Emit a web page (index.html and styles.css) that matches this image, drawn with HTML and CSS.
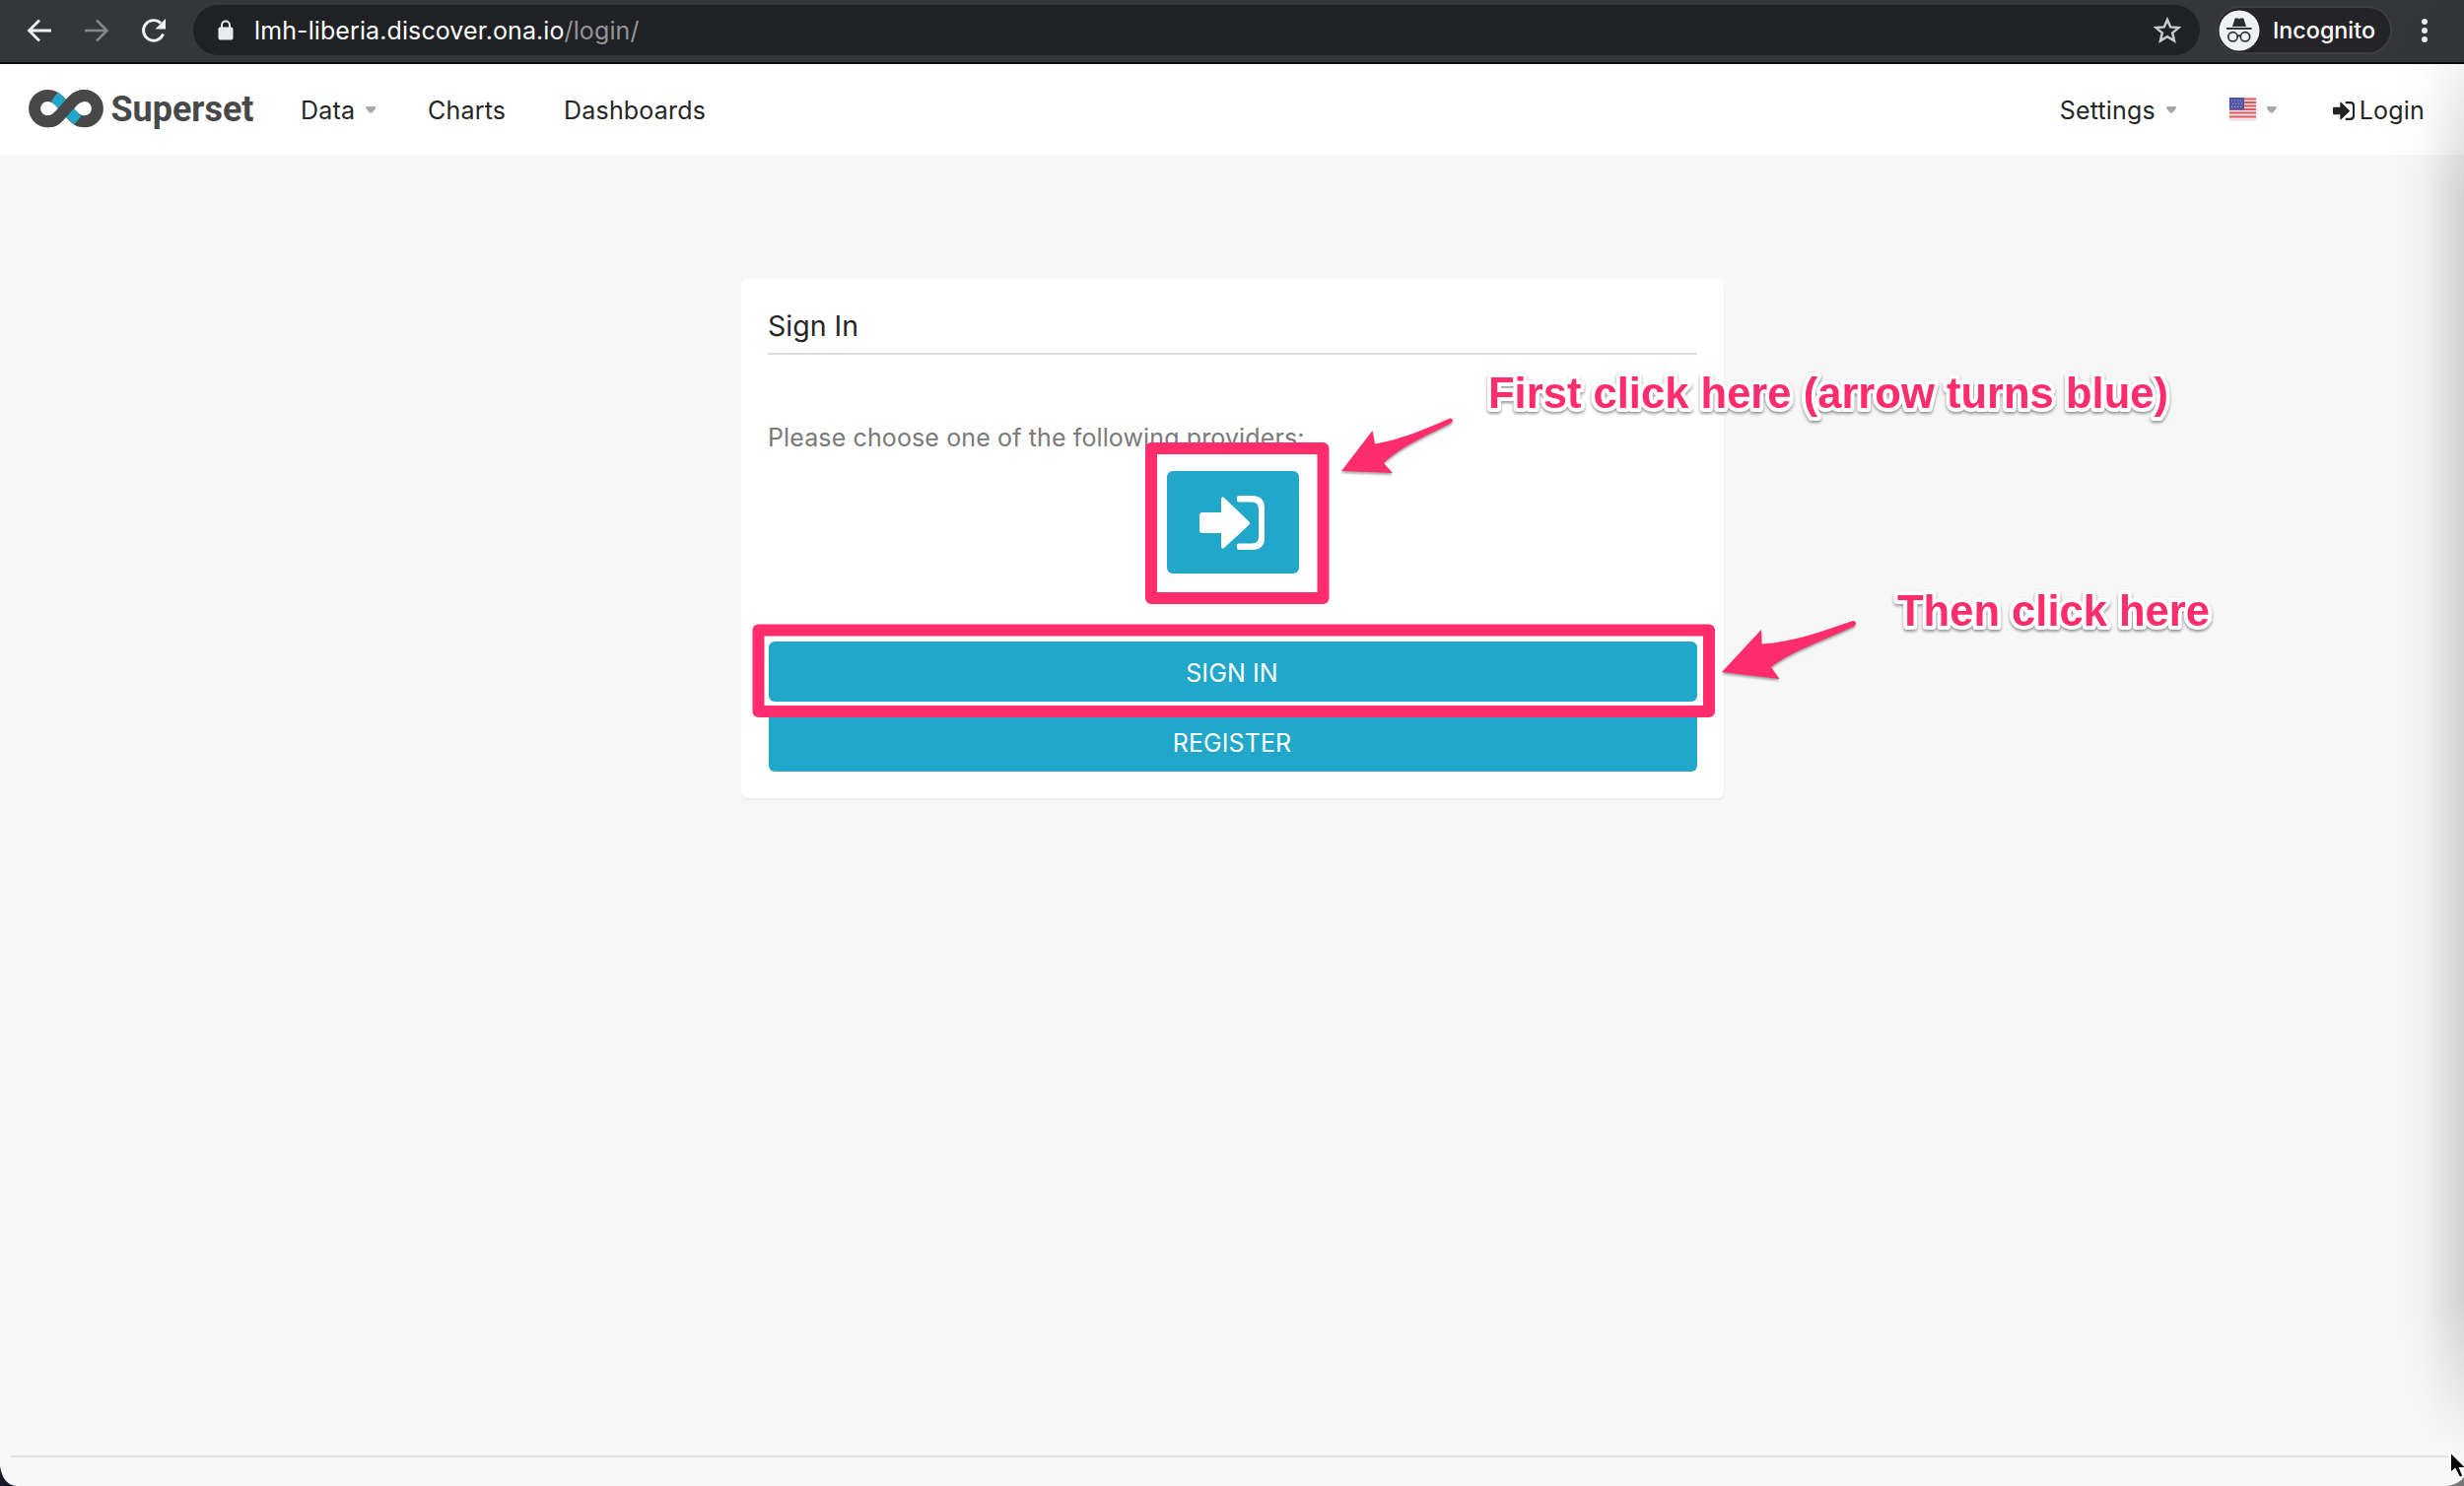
FILE: index.html
```html
<!DOCTYPE html>
<html lang="en">
<head>
<meta charset="utf-8">
<title>Superset</title>
<link rel="stylesheet" href="styles.css">
</head>
<body>
<svg class="defs" width="0" height="0">
  <symbol id="signin" viewBox="0 0 66 55">
    <path d="M3 17h19V4q0-4 3-2l25 24q2 2 0 4L25 53q-3 2-3-2V38H3q-3 0-3-3V20q0-3 3-3z"/>
    <path d="M40 0h13q13 0 13 12v31q0 12-13 12H40q-2 0-2-2v-3q0-1.500 2-1.500h13q7 0 7-7v-28q0-7-7-7H40q-2 0-2-2V2q0-2 2-2z"/>
  </symbol>
</svg>

<header class="toolbar">
  <nav class="controls">
    <svg width="26" height="26" viewBox="0 0 26 26"><path d="M25 13H3M13 2.500 2.500 13 13 23.500" fill="none" stroke="#f1f3f4" stroke-width="2.800"/></svg>
    <svg width="26" height="26" viewBox="0 0 26 26"><path d="M1 13h22M13 2.500 23.500 13 13 23.500" fill="none" stroke="#85868a" stroke-width="2.600"/></svg>
    <svg width="26" height="26" viewBox="0 0 26 26"><path d="M22.500 16.500A10.300 10.300 0 1 1 20 5.500" fill="none" stroke="#f1f3f4" stroke-width="2.900"/><path d="M25 1v10.500H14.500z" fill="#f1f3f4"/></svg>
  </nav>
  <div class="address">
    <svg width="16" height="21" viewBox="0 0 16 21"><path d="M4 9V5.500a4 4 0 0 1 8 0V9" fill="none" stroke="#e8eaed" stroke-width="2"/><rect x=".5" y="7.500" width="15" height="13" rx="2" fill="#e8eaed"/></svg>
    <span class="url">lmh-liberia.discover.ona.io<span class="path">/login/</span></span>
    <svg class="star" width="28" height="27" viewBox="0 0 28 27"><path d="M14 3l3.200 7.400 8.100.7-6.100 5.300 1.800 7.900-7-4.200-7 4.200 1.800-7.900L2.700 11.100l8.100-.7z" fill="none" stroke="#c8cacd" stroke-width="2.500"/></svg>
  </div>
  <div class="incognito">
    <svg width="42" height="42" viewBox="0 0 42 42"><circle cx="21" cy="21" r="20.500" fill="#eff1f5"/><g fill="#2b2c30"><path d="M14 17l2.500-8q.5-1 1.500-.7l3 .7 3-.7q1-.3 1.500.7l2.500 8z"/><rect x="8" y="18" width="25.500" height="1.900"/></g><g fill="none" stroke="#2b2c30" stroke-width="1.700"><circle cx="14.500" cy="27.300" r="4.700"/><circle cx="27" cy="27.300" r="4.700"/><path d="M19 26.800q1.700-1.200 3.500 0"/></g></svg>
    <span>Incognito</span>
  </div>
  <svg class="menu" width="8" height="26" viewBox="0 0 8 26"><g fill="#e8eaed"><circle cx="4" cy="4" r="3"/><circle cx="4" cy="13" r="3"/><circle cx="4" cy="22" r="3"/></g></svg>
</header>

<nav class="navbar">
  <svg class="brand" width="232" height="46" viewBox="0 0 232 46">
    <path d="M39 23C31 32 28 36.300 20.300 36.300a13.200 13.200 0 0 1 0-26.400C28 9.900 31 14 39 23S50 36.300 57.700 36.300a13.200 13.200 0 0 0 0-26.400C50 9.900 47 14 39 23z" fill="none" stroke="#484848" stroke-width="12"/>
    <path d="M31 6.500 24 15.500 47 39.500 54.500 31z" fill="#20a7c9"/>
    <path d="M20.300 36.300C28 36.300 31 32 39 23S50 9.900 57.700 9.900" fill="none" stroke="#484848" stroke-width="12"/>
    <text class="brand-name" x="84.500" y="35.500" textLength="145" lengthAdjust="spacingAndGlyphs">Superset</text>
  </svg>
  <a class="item data">Data<i class="caret"></i></a>
  <a class="item charts">Charts</a>
  <a class="item dashboards">Dashboards</a>
  <a class="item settings">Settings<i class="caret"></i></a>
  <a class="item lang">
    <svg width="27" height="22" viewBox="0 0 27 22"><rect width="27" height="22" rx="1" fill="#fbe9e9"/><path d="M0 1.500h27M0 5h27M0 8.500h27M0 12h27M0 15.500h27M0 19.500h27" stroke="#e0565b" stroke-width="1.900"/><rect width="15" height="12.500" fill="#5054a4"/><path d="M2 3h12M3 6.200h12M2 9.400h12" stroke="#a9abd6" stroke-width="1.100" stroke-dasharray="1.300 1.700"/></svg>
    <i class="caret"></i>
  </a>
  <a class="item login"><svg width="22" height="19" viewBox="0 0 66 55" preserveAspectRatio="none"><use href="#signin"/></svg>Login</a>
</nav>

<main class="page">
  <section class="card">
    <h1>Sign In</h1>
    <p>Please choose one of the following providers:</p>
    <button class="provider"><svg width="66" height="55"><use href="#signin"/></svg></button>
    <button class="wide">SIGN IN</button>
    <button class="wide">REGISTER</button>
  </section>
</main>
<footer class="footer"></footer>

<div class="edge-shadow"></div>

<svg class="annotations" width="2500" height="1508" viewBox="0 0 2500 1508">
  <g class="marks">
    <rect x="1168" y="455" width="174.500" height="152"/>
    <rect x="769.500" y="639.500" width="964.500" height="82.500"/>
  </g>
  <g class="arrows">
    <path d="M1361 478 1392.500 437 1395 450.500C1421 446 1445 436 1471 424.500q3-.5 3 2.500-1 2-3 3C1448 442 1420 454 1404 470L1413 480z"/>
    <path d="M1747 682 1787 639 1787.500 653.500C1819 652 1850 640 1880 630q3 0 3 3-1 2-3 3C1855 648 1815 662 1797 677L1805.500 689z"/>
  </g>
  <g class="notes">
    <text x="1510" y="414" textLength="690" lengthAdjust="spacingAndGlyphs">First click here (arrow turns blue)</text>
    <text x="1925" y="635" textLength="317" lengthAdjust="spacingAndGlyphs">Then click here</text>
  </g>
  <path class="corner" d="M0 1488V1508H17Q3 1507 0 1488z"/>
  <path d="M2483 1508q12-2 17-9v9z" fill="#777"/>
  <path class="cursor" d="M2486 1473V1495L2491 1491 2495.500 1500 2499.500 1498 2496 1490H2503z"/>
</svg>
</body>
</html>
```
FILE: styles.css
```css
* { box-sizing: border-box; }

body {
  margin: 0;
  width: 2500px;
  height: 1508px;
  display: flex;
  flex-direction: column;
  position: relative;
  overflow: hidden;
  background: #f7f7f7;
  color: #262626;
  font: 25px Inter, "Liberation Sans", sans-serif;
}

svg { flex: none; }
.defs { display: none; }

.toolbar {
  height: 65px;
  flex: none;
  display: flex;
  align-items: center;
  padding: 0 36px 2px 27px;
  background: #35363a;
  border-bottom: 2px solid #0c0c0d;
}
.controls { display: flex; gap: 32px; width: 169px; }
.address {
  width: 2036px;
  height: 51px;
  border-radius: 26px;
  display: flex;
  align-items: center;
  padding: 0 19px 0 25px;
  background: #202124;
}
.url { margin-left: 21px; color: #fff; font-size: 25px; white-space: nowrap; letter-spacing: .1px; }
.url .path { color: #929498; }
.star { margin-left: auto; }
.incognito {
  width: 179px;
  height: 49px;
  margin-left: 16px;
  display: flex;
  align-items: center;
  gap: 13px;
  padding-left: 1px;
  border: 2px solid #3d3e42;
  border-radius: 25px;
  background: #232328;
  color: #fff;
  font-size: 23.300px;
  font-weight: 500;
}
.menu { margin-left: auto; }

.navbar {
  height: 92px;
  flex: none;
  display: flex;
  align-items: center;
  padding: 0 40px 3px 28px;
  background: #fff;
  letter-spacing: .2px;
}
.brand-name { font: bold 36px Roboto, sans-serif; letter-spacing: 0; fill: #484848; }
.item { display: flex; align-items: center; white-space: nowrap; margin-top: 5px; }
.caret {
  width: 10px;
  height: 7px;
  margin-left: 11px;
  margin-top: -2px;
  background: #a9a9a9;
  clip-path: polygon(5% 0, 95% 0, 100% 35%, 62% 100%, 38% 100%, 0 35%);
}
.data { margin-left: 45px; width: 129px; }
.charts { width: 138px; }
.settings { margin-left: auto; width: 172px; }
.lang { width: 105px; }
.lang svg { margin-top: -5px; filter: drop-shadow(0 1px 1px #ccc); }
.login svg { margin-right: 5px; fill: #222; }

.page { flex: 1; padding: 126px 0 0 1px; }
.card {
  width: 997px;
  height: 527px;
  margin: 0 auto;
  display: flex;
  flex-direction: column;
  align-items: center;
  padding: 0 27px;
  border-radius: 6px;
  background: #fff;
  box-shadow: 0 2px 1px #ececec;
}
h1 {
  width: 100%;
  height: 77px;
  margin: 0;
  padding-top: 30px;
  border-bottom: 2px solid #dedede;
  font-size: 28.500px;
  font-weight: 400;
  line-height: 36px;
}
.card p {
  width: 100%;
  height: 118px;
  margin: 0;
  padding-top: 68px;
  color: #7a7a7a;
  letter-spacing: .12px;
  line-height: 32px;
  white-space: nowrap;
}
button {
  border: 0;
  padding: 0;
  border-radius: 6px;
  background: #20a7c9;
  color: #fff;
  font: 25px Inter, sans-serif;
  letter-spacing: .1px;
  flex: none;
}
.provider {
  width: 134px;
  height: 104px;
  margin-bottom: 69px;
  padding-right: 2px;
  display: flex;
  align-items: center;
  justify-content: center;
  fill: #fff;
}
.wide { width: 942px; height: 61px; padding: 3px 1px 0 0; margin-bottom: 10px; }

.footer {
  height: 31px;
  margin: 0 16px 0 11px;
  border-top: 2px solid #e1e1e1;
  flex: none;
}

.edge-shadow {
  position: absolute;
  top: 0;
  right: 0;
  width: 75px;
  height: 1475px;
  background: linear-gradient(to right, transparent, rgba(0, 0, 0, .025) 45%, rgba(0, 0, 0, .15));
  -webkit-mask-image: linear-gradient(transparent, #000 200px, #000 1320px, transparent);
  mask-image: linear-gradient(transparent, #000 200px, #000 1320px, transparent);
}
.annotations { position: absolute; inset: 0; }
.marks { fill: none; stroke: #ff2d6c; stroke-width: 12; stroke-linejoin: round; }
.arrows { fill: #ff2d6c; filter: drop-shadow(0 2px 1px rgba(0, 0, 0, .35)); }
.notes {
  font: bold 45px "Liberation Sans", sans-serif;
  fill: #ff2d6c;
  stroke: #fff;
  stroke-width: 8;
  stroke-linejoin: round;
  paint-order: stroke;
  filter: drop-shadow(0 2px 1.500px rgba(0, 0, 0, .4));
}
.corner { fill: #161b2b; }
.cursor { fill: #000; stroke: #fff; stroke-width: 2; }
```
